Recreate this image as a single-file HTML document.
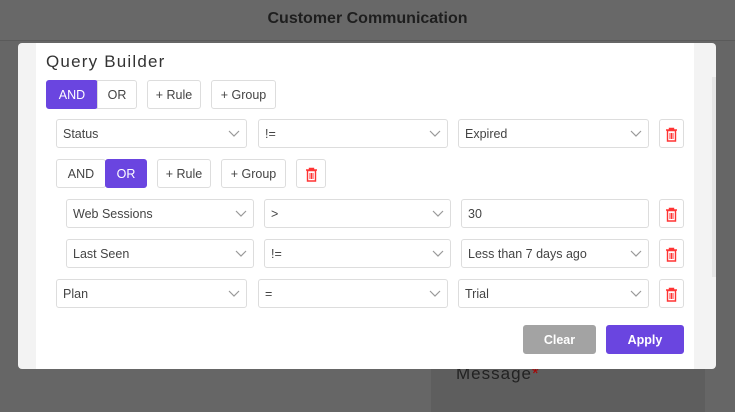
<!DOCTYPE html><html><head><style>
body{margin:0;width:735px;height:412px;background:#666;font-family:"Liberation Sans",sans-serif;position:relative;overflow:hidden}
.a{position:absolute;box-sizing:border-box}
.hdr{left:0;top:0;width:735px;height:41px;background:#686868;border-bottom:1px solid #5a5a5a;text-align:center;font-weight:bold;font-size:16px;line-height:38px;color:#1e1e1e}
.modal{left:18px;top:43px;width:698px;height:326px;background:#f3f3f3;border-radius:4px}
.inner{left:36px;top:43px;width:658px;height:326px;background:#fff}
.btn{border:1px solid #ddd;border-radius:3px;height:29px;font-size:12.5px;color:#444;display:flex;align-items:center;justify-content:center;background:#fff;padding-top:1px}
.p{background:#6a45e0;color:#fff;border-color:#6a45e0}
.sel{border:1px solid #ddd;border-radius:3px;height:29px;font-size:12.5px;color:#444;padding-left:6px;line-height:29px;background:#fff}
.sel svg{position:absolute;right:6px;top:10px}
.tr{width:25px;height:29px}
</style></head><body>
<div class="a hdr">Customer Communication</div>
<div class="a" style="left:431px;top:369px;width:274px;height:43px;background:#5e5e5e"></div>
<div class="a" style="left:456px;top:364px;font-size:17px;color:#222;letter-spacing:1px">Message<span style="color:#a00">*</span></div>
<div class="a modal"></div>
<div class="a" style="left:712px;top:77px;width:4px;height:200px;background:#e6e6e6"></div>
<div class="a inner"></div>
<div class="a" style="left:46px;top:52px;font-size:17px;color:#333;letter-spacing:1.2px">Query Builder</div>
<div id="c"></div>
<script>
const c=document.getElementById('c');
const chev='<svg width="12" height="8" viewBox="0 0 12 8"><path d="M1 1l5 5 5-5" fill="none" stroke="#999" stroke-width="1.2"/></svg>';
const trash='<svg width="13" height="15" viewBox="0 0 13 15"><path d="M1 3h11M4.5 3V1.5h4V3M2.5 3.5h8v10.5h-8z" fill="none" stroke="#f33" stroke-width="1.4"/><path d="M5 6v6M6.5 6v6M8 6v6" stroke="#f33" stroke-width="1"/></svg>';
function b(x,y,w,t,cls){c.insertAdjacentHTML('beforeend',`<div class="a btn ${cls||''}" style="left:${x}px;top:${y}px;width:${w}px">${t}</div>`)}
function s(x,y,w,t,ch=true){c.insertAdjacentHTML('beforeend',`<div class="a sel" style="left:${x}px;top:${y}px;width:${w}px">${t}${ch?chev:''}</div>`)}
function tr(x,y){b(x,y,25,trash,'tr')}
b(46,80,52,'AND','p');b(97,80,40,'OR');c.lastChild.style.borderRadius='0 3px 3px 0';b(147,80,54,'+ Rule');b(211,80,65,'+ Group');
s(56,119,191,'Status');s(258,119,190,'!=');s(458,119,191,'Expired');tr(659,119);
b(56,159,50,'AND');b(105,159,42,'OR','p');b(157,159,54,'+ Rule');b(221,159,65,'+ Group');tr(296,159);c.lastChild.style.width='30px';
s(66,199,188,'Web Sessions');s(264,199,187,'&gt;');s(461,199,188,'30',false);tr(659,199);
s(66,239,188,'Last Seen');s(264,239,187,'!=');s(461,239,188,'Less than 7 days ago');tr(659,239);
s(56,279,191,'Plan');s(258,279,190,'=');s(458,279,191,'Trial');tr(659,279);
b(523,325,73,'<b>Clear</b>');c.lastChild.style.cssText+='background:#a3a3a3;color:#fff;border-color:#a3a3a3';
b(606,325,78,'<b>Apply</b>','p');
</script>
</body></html>
